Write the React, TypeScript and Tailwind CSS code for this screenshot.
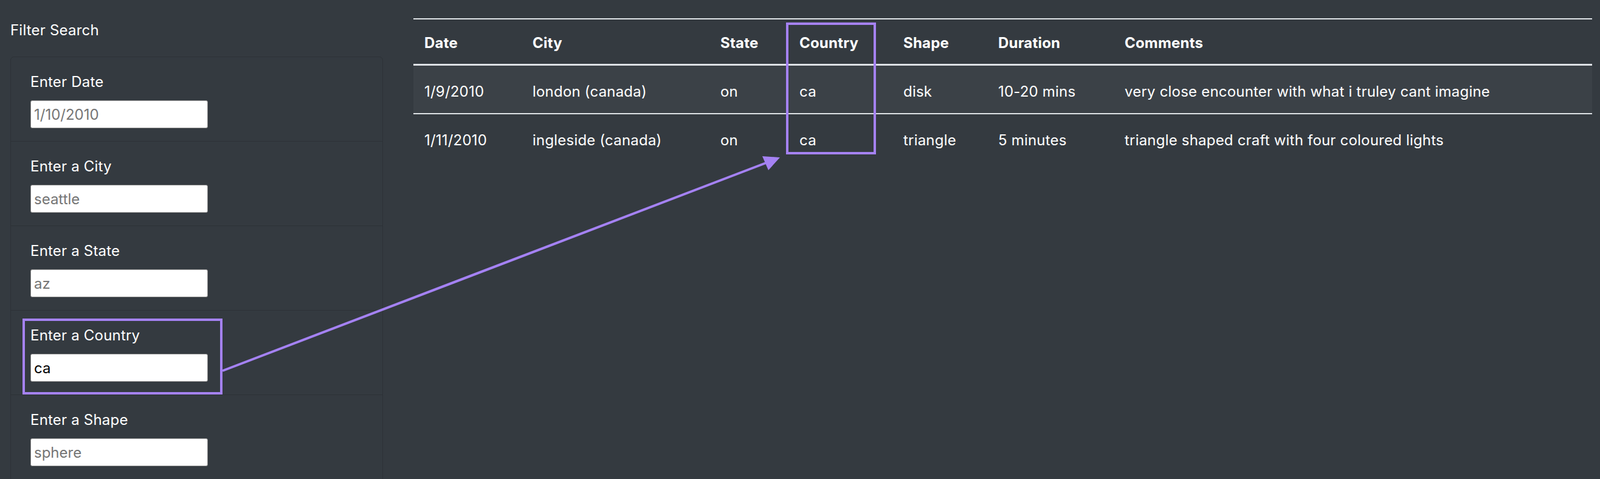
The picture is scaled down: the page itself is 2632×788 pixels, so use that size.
import React from "react";

const filters = [
  { label: "Enter Date", placeholder: "1/10/2010", value: "" },
  { label: "Enter a City", placeholder: "seattle", value: "" },
  { label: "Enter a State", placeholder: "az", value: "" },
  { label: "Enter a Country", placeholder: "us", value: "ca" },
  { label: "Enter a Shape", placeholder: "sphere", value: "" },
];

const headers = ["Date", "City", "State", "Country", "Shape", "Duration", "Comments"];

const rows = [
  ["1/9/2010", "london (canada)", "on", "ca", "disk", "10-20 mins", "very close encounter with what i truley cant imagine"],
  ["1/11/2010", "ingleside (canada)", "on", "ca", "triangle", "5 minutes", "triangle shaped craft with four coloured lights"],
];

const gridCols = "grid grid-cols-[178px_309px_130px_171px_156px_208px_1fr]";

export default function App() {
  return (
    <div className="relative h-[788px] w-[2632px] overflow-hidden bg-[#343a40] text-white tracking-[0.2px] font-['Inter','Noto_Sans',sans-serif]">
      <div className="flex">
        {/* Sidebar */}
        <aside className="w-[630px] shrink-0 pl-[17px] pt-[32px]">
          <h2 className="text-[24px] leading-[36px] font-normal">Filter Search</h2>
          <div className="mt-[25px] rounded-t-[6px] border border-[#2d3237]">
            {filters.map((f, i) => (
              <div
                key={f.label}
                className={
                  i === 0
                    ? "px-[32px] pt-[23px] pb-[21px]"
                    : "border-t border-[#2d3237] px-[32px] pt-[23px] pb-[21px]"
                }
              >
                <label className="mb-[12px] block text-[24px] leading-[36px]">{f.label}</label>
                <input
                  type="text"
                  defaultValue={f.value}
                  placeholder={f.value ? "" : f.placeholder}
                  className="block h-[46px] w-[292px] rounded-[3px] border border-[#8a8a8a] bg-white px-[5px] text-[24px] tracking-normal text-black placeholder:text-[#757575] outline-none"
                />
              </div>
            ))}
          </div>
        </aside>

        {/* Table */}
        <main className="flex-1 pl-[50px] pr-[13px] pt-[30px]">
          <div className="border-t-2 border-[#dee2e6]">
            <div className={`${gridCols} border-b-[3px] border-[#dee2e6]`}>
              {headers.map((h) => (
                <div key={h} className="px-[18px] pt-[21px] pb-[16px] text-[24px] leading-[36px] font-bold">
                  {h}
                </div>
              ))}
            </div>
            {rows.map((r, i) => (
              <div
                key={i}
                className={
                  i === 0
                    ? `${gridCols} bg-white/[0.035]`
                    : `${gridCols} border-t-2 border-[#dee2e6]`
                }
              >
                {r.map((c, j) => (
                  <div key={j} className="px-[18px] pt-[25px] pb-[17px] text-[24px] leading-[36px]">
                    {c}
                  </div>
                ))}
              </div>
            ))}
          </div>
        </main>
      </div>

      {/* Annotation boxes */}
      <div className="pointer-events-none absolute left-[37px] top-[524px] h-[125px] w-[329px] border-4 border-[#a582f4]" />
      <div className="pointer-events-none absolute left-[1293px] top-[37px] h-[217px] w-[148px] border-4 border-[#a582f4]" />

      {/* Arrow */}
      <svg className="pointer-events-none absolute left-0 top-0" width="2632" height="788" viewBox="0 0 2632 788">
        <line x1="366" y1="610" x2="1260" y2="268" stroke="#a582f4" strokeWidth="4" />
        <polygon points="1283,259 1254,257 1264,280" fill="#a582f4" />
      </svg>
    </div>
  );
}
